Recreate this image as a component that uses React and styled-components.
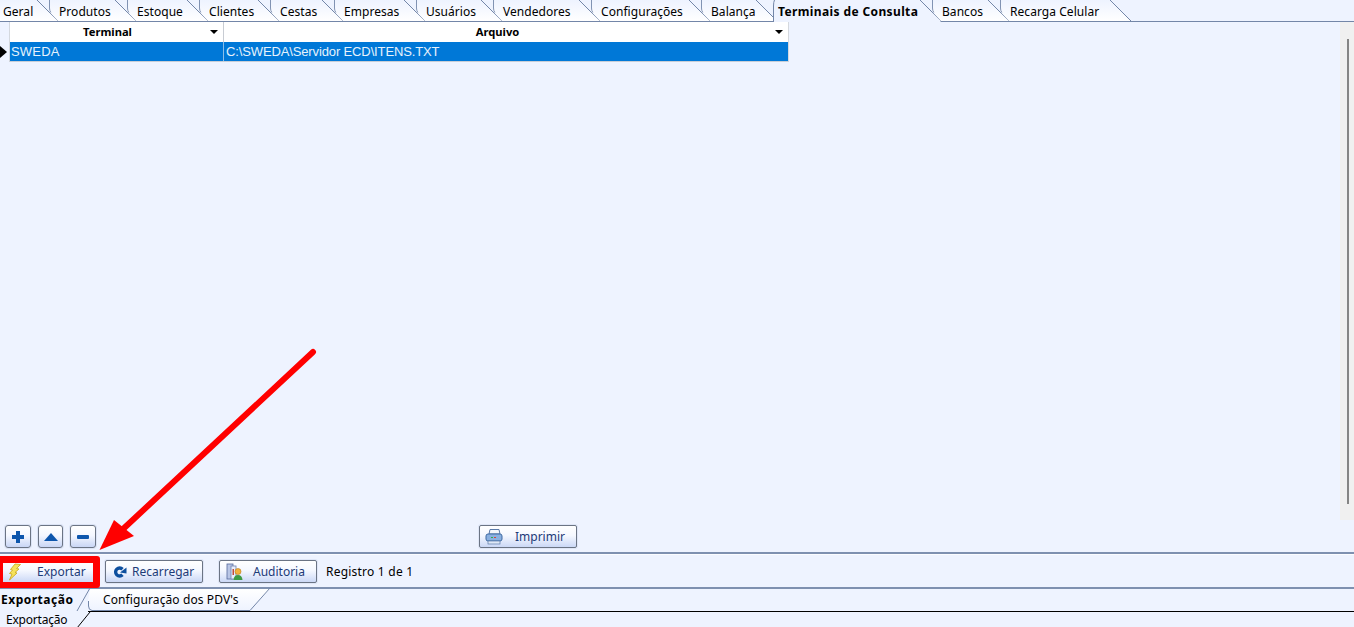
import React from "react";
import styled, { createGlobalStyle } from "styled-components";

const Global = createGlobalStyle`
  html, body { margin: 0; padding: 0; background: #eef3ff; }
  body { font-family: "DejaVu Sans", sans-serif; font-size: 11px; color: #000; overflow: hidden; }
  #root { width: 1354px; height: 627px; }
`;

const Page = styled.div`
  position: relative;
  width: 1354px;
  height: 627px;
  overflow: hidden;
  display: flex;
  flex-direction: column;
  background: #eef3ff;
`;

const TabStrip = styled.div`
  display: flex;
  flex: none;
  height: 22px;
  box-sizing: border-box;
  border-bottom: 1px solid #7386a8;
`;
const TabRow = styled.div`
  display: flex;
  margin-left: -7px;
`;
const TabCell = styled.div`
  position: relative;
  flex: none;
  width: ${(p) => p.$w}px;
  height: 22px;
`;
const TabShape = styled.svg`
  position: absolute;
  left: 0;
  top: 0;
  overflow: visible;
`;
const TabLabel = styled.span`
  position: absolute;
  left: 10px;
  top: 4px;
  line-height: 15px;
  white-space: nowrap;
  font-size: 12px;
  font-family: "Noto Sans", sans-serif;
  font-weight: ${(p) => (p.$active ? 700 : 400)};
  letter-spacing: ${(p) => (p.$active ? "0.38px" : "0.05px")};
  color: #000;
`;

const Main = styled.div`
  flex: none;
  height: 530px;
  display: flex;
  flex-direction: column;
`;
const Content = styled.div`
  flex: none;
  height: 498px;
  display: flex;
`;
const GridZone = styled.div`
  flex: 1;
  display: flex;
  align-items: flex-start;
`;
const Indicator = styled.div`
  flex: none;
  width: 9px;
  height: 40px;
  display: flex;
  flex-direction: column;
  justify-content: flex-end;
  box-sizing: border-box;
  padding-bottom: 4px;
`;
const Pointer = styled.div`
  width: 0;
  height: 0;
  border-left: 7px solid #000;
  border-top: 6px solid transparent;
  border-bottom: 6px solid transparent;
`;
const Grid = styled.div`
  flex: none;
  width: 780px;
  display: grid;
  grid-template-columns: 214px 564px;
  grid-template-rows: 20px 19px;
  box-sizing: border-box;
  border-right: 1px solid #d4d8de;
  border-bottom: 1px solid #c9ced6;
  border-left: 1px solid #d4d8de;
`;
const HeaderCell = styled.div`
  position: relative;
  background: #fff;
  text-align: center;
  font-family: "Noto Sans", sans-serif;
  font-weight: 700;
  font-size: 11.2px;
  line-height: 19px;
  color: #000;
  padding-right: ${(p) => p.$pad}px;
  border-right: ${(p) => (p.$last ? "none" : "1px solid #c8ccd3")};
  box-sizing: border-box;
`;
const Caret = styled.span`
  position: absolute;
  right: 5px;
  top: 8px;
  width: 0;
  height: 0;
  border-top: 4px solid #000;
  border-left: 4px solid transparent;
  border-right: 4px solid transparent;
`;
const DataCell = styled.div`
  background: #0078d7;
  color: #e6f2fc;
  font-family: "Liberation Sans", sans-serif;
  font-size: 13px;
  letter-spacing: ${(p) => p.$track}px;
  line-height: 20px;
  padding-left: ${(p) => p.$pad}px;
  height: 19px;
  overflow: hidden;
  white-space: nowrap;
  border-right: ${(p) => (p.$last ? "none" : "1px solid #8dbfe8")};
  box-sizing: border-box;
`;
const ScrollTrack = styled.div`
  flex: none;
  width: 14px;
  background: #f0f0f0;
  display: flex;
  justify-content: center;
  padding-top: 17px;
  padding-bottom: 16px;
  box-sizing: border-box;
`;
const ScrollThumb = styled.div`
  width: 2px;
  margin-left: 2px;
  background: #858585;
`;

const Actions = styled.div`
  flex: 1;
  display: flex;
  align-items: flex-start;
  padding: 5px 0 0 5px;
`;
const SquareGroup = styled.div`
  display: flex;
  gap: 7px;
`;
const SquareBtn = styled.button`
  flex: none;
  width: ${(p) => p.$w}px;
  height: 23px;
  padding: 0;
  display: flex;
  align-items: center;
  justify-content: center;
  box-sizing: border-box;
  border: 1px solid #6b7484;
  border-radius: 3px;
  background: linear-gradient(#ffffff 0%, #f4f7ff 45%, #c9d6f5 100%);
  box-shadow: 0 0 0 1px #dbe3f5;
`;
const Btn = styled.button`
  flex: none;
  width: ${(p) => p.$w}px;
  height: 23px;
  margin-left: ${(p) => p.$ml || 0}px;
  padding: 0;
  position: relative;
  display: flex;
  align-items: center;
  justify-content: center;
  box-sizing: border-box;
  border: 1px solid #6b7484;
  border-radius: 2px;
  background: linear-gradient(#ffffff 0%, #f5f8ff 45%, #cbd8f6 100%);
  box-shadow: 0 0 0 1px #dfe6f7;
  font-family: "Noto Sans", sans-serif;
  font-size: 12px;
  color: #1d3b78;
`;
const BtnIcon = styled.svg`
  position: absolute;
  left: ${(p) => p.$x}px;
  top: 2px;
`;
const BtnText = styled.span`
  position: absolute;
  left: ${(p) => p.$x}px;
  top: 3px;
  line-height: 15px;
  white-space: nowrap;
`;

const Divider = styled.div`
  flex: none;
  height: 2px;
  background: #7e90b0;
`;
const Toolbar = styled.div`
  position: relative;
  flex: none;
  height: 33px;
  box-sizing: border-box;
  border-top: 1px solid #fbfcff;
  padding: 5px 0 0 1px;
  display: flex;
  align-items: flex-start;
`;
const RedFrame = styled.div`
  position: absolute;
  left: 0;
  top: 1px;
  width: 100px;
  height: 32px;
  box-sizing: border-box;
  border-style: solid;
  border-color: #ff0000;
  border-width: 7px 7px 6px 3px;
  border-top-right-radius: 3px;
  border-bottom-right-radius: 3px;
`;
const Status = styled.span`
  margin-left: 9px;
  line-height: 23px;
  font-family: "Noto Sans", sans-serif;
  font-size: 12px;
  letter-spacing: 0.22px;
  color: #000;
`;

const LowerStrip = styled.div`
  flex: none;
  height: 23px;
  display: flex;
`;
const LowerActive = styled.div`
  flex: none;
  width: 88px;
  font-family: "Noto Sans", sans-serif;
  font-weight: 700;
  font-size: 12px;
  letter-spacing: 0.5px;
  line-height: 22px;
  padding-left: 1px;
  box-sizing: border-box;
`;
const LowerTab = styled.div`
  position: relative;
  flex: none;
  width: 183px;
  box-sizing: border-box;
  border-bottom: 1px solid #000;
`;
const LowerFill = styled.div`
  flex: 1;
  box-sizing: border-box;
  border-bottom: 1px solid #000;
`;
const LowerLabel = styled.span`
  position: absolute;
  left: 15px;
  top: 3px;
  line-height: 15px;
  font-family: "Noto Sans", sans-serif;
  font-size: 12px;
  letter-spacing: 0.1px;
  white-space: nowrap;
`;
const SubStrip = styled.div`
  position: relative;
  flex: 1;
  padding-left: 6px;
  font-family: "Noto Sans", sans-serif;
  font-size: 12px;
  letter-spacing: -0.2px;
  line-height: 16px;
`;
const SubSlant = styled.svg`
  position: absolute;
  left: 76px;
  top: 0;
`;
const Arrow = styled.svg`
  position: absolute;
  left: 0;
  top: 0;
  pointer-events: none;
`;

const tabs = [
  ["Geral", 56], ["Produtos", 78], ["Estoque", 72], ["Clientes", 71], ["Cestas", 64],
  ["Empresas", 82], ["Usuários", 77], ["Vendedores", 98], ["Configurações", 110],
  ["Balança", 67], ["Terminais de Consulta", 164, true], ["Bancos", 68], ["Recarga Celular", 122],
];

function Tab({ label, w, active, first }) {
  const tail = w + 9;
  const fill = active
    ? `M5 0 L${tail - 21} 0 L${tail} 22 L5 22 Z`
    : first
    ? `M0 0 L${w - 11} 0 L${tail} 21 L0 21 Z`
    : `M0 0 L${w - 11} 0 L${tail} 21 L9 21 L1 12.5 Q0 10 0 8 Z`;
  return (
    <TabCell $w={w}>
      <TabShape width={w + 12} height="22">
        <path d={fill} fill={active ? "#eef3ff" : "url(#tabFill)"} />
        {!first && !active && <path d="M0.5 0 L0.5 8 Q0.5 10.5 1.8 12.5" fill="none" stroke="#8193b3" />}
        {active && <path d="M5.5 22 L5.5 6 Q5.5 2 6.5 0" fill="none" stroke="#7386a8" />}
        <path d={`M${tail - 21} 0 L${tail} 21`} fill="none" stroke="#7386a8" />
      </TabShape>
      <TabLabel $active={active}>{label}</TabLabel>
    </TabCell>
  );
}

const Bolt = () => (
  <BtnIcon $x={4} width="18" height="18" viewBox="0 0 18 18">
    <path d="M9 1 L14.5 1.5 L10.5 5.5 L13 6 L9 9.5 L11 10 L3.5 17 L6 11 L3.5 10.5 L6.5 7 L4.5 6.5 Z" fill="#f5e25a" stroke="#c9a516" strokeWidth="0.8" />
  </BtnIcon>
);
const Reload = () => (
  <BtnIcon $x={5} width="18" height="18" viewBox="0 0 18 18">
    <path d="M11.5 6.2 A4 4 0 1 0 11.5 11.8" fill="none" stroke="#0d4f9e" strokeWidth="3.4" />
    <path d="M9 9.5 L15.5 4.5 L15.5 10.5 Z" fill="#0d4f9e" />
  </BtnIcon>
);
const Audit = () => (
  <BtnIcon $x={5} width="20" height="18" viewBox="0 0 20 18">
    <rect x="2" y="1" width="6" height="15" fill="#b9c6e6" stroke="#55699c" strokeWidth="0.8" />
    <rect x="6" y="3" width="5" height="13" fill="#e8eefb" stroke="#6b7fb0" strokeWidth="0.8" />
    <rect x="7.5" y="6" width="1.5" height="6" fill="#c24a3a" />
    <circle cx="13" cy="8.5" r="3" fill="#f2b13c" stroke="#b97a16" strokeWidth="0.6" />
    <path d="M8.5 17 Q9 12 13 12 Q17 12 17.5 17 Z" fill="#3d9a45" />
  </BtnIcon>
);
const Printer = () => (
  <BtnIcon $x={5} width="18" height="18" viewBox="0 0 18 18">
    <path d="M5 1.5 L14 1.5 L15 6 L4 6 Z" fill="#f4f6fb" stroke="#5a79a8" />
    <rect x="1" y="6" width="16" height="7" rx="2" fill="#8ab0e0" stroke="#3f6ba3" />
    <rect x="3" y="13" width="12" height="3" fill="#dfe8f6" stroke="#5a79a8" strokeWidth="0.7" />
    <rect x="6" y="9" width="2" height="1" fill="#2fae4c" />
    <rect x="9" y="9" width="2" height="1" fill="#d8433a" />
  </BtnIcon>
);

export default function App() {
  return (
    <Page>
      <Global />
      <svg width="0" height="0" aria-hidden="true">
        <defs>
          <linearGradient id="tabFill" x1="0" y1="0" x2="0" y2="1">
            <stop offset="0" stopColor="#eef3ff" />
            <stop offset="1" stopColor="#ffffff" />
          </linearGradient>
        </defs>
      </svg>
      <TabStrip>
        <TabRow>
          {tabs.map(([label, w, active], i) => (
            <Tab key={label} label={label} w={w} active={active} first={i === 0} />
          ))}
        </TabRow>
      </TabStrip>
      <Main>
        <Content>
          <GridZone>
            <Indicator>
              <Pointer />
            </Indicator>
            <Grid>
              <HeaderCell $pad={18}>Terminal<Caret /></HeaderCell>
              <HeaderCell $pad={17} $last>Arquivo<Caret /></HeaderCell>
              <DataCell $pad={1} $track={0.2}>SWEDA</DataCell>
              <DataCell $pad={2} $track={-0.13} $last>C:\SWEDA\Servidor ECD\ITENS.TXT</DataCell>
            </Grid>
          </GridZone>
          <ScrollTrack>
            <ScrollThumb />
          </ScrollTrack>
        </Content>
        <Actions>
          <SquareGroup>
            <SquareBtn $w={26} aria-label="Adicionar">
              <svg width="14" height="14" viewBox="0 0 14 14"><path d="M5 1 H9 V5 H13 V9 H9 V13 H5 V9 H1 V5 H5 Z" fill="#0d56ad" /></svg>
            </SquareBtn>
            <SquareBtn $w={25} aria-label="Subir">
              <svg width="16" height="10" viewBox="0 0 16 10"><path d="M8 1 L15 9 H1 Z" fill="#0d56ad" /></svg>
            </SquareBtn>
            <SquareBtn $w={26} aria-label="Remover">
              <svg width="14" height="6" viewBox="0 0 14 6"><rect x="1" y="1" width="12" height="4" rx="1" fill="#0d56ad" /></svg>
            </SquareBtn>
          </SquareGroup>
          <Btn $w={98} $ml={383}>
            <Printer />
            <BtnText $x={35}>Imprimir</BtnText>
          </Btn>
        </Actions>
      </Main>
      <Divider />
      <Toolbar>
        <Btn $w={97}>
          <Bolt />
          <BtnText $x={35}>Exportar</BtnText>
        </Btn>
        <Btn $w={98} $ml={7}>
          <Reload />
          <BtnText $x={26}>Recarregar</BtnText>
        </Btn>
        <Btn $w={98} $ml={16}>
          <Audit />
          <BtnText $x={33}>Auditoria</BtnText>
        </Btn>
        <Status>Registro 1 de 1</Status>
        <RedFrame />
      </Toolbar>
      <Divider />
      <LowerStrip>
        <LowerActive>Exportação</LowerActive>
        <LowerTab>
          <TabShape width="183" height="23">
            <path d="M2 0 H182 L162 21.5 H4 Q0 21 0 17 V12 Z" fill="url(#lowerFill)" />
            <path d="M2 -1 L-11 22 M0.5 12 V17 Q0.5 21 4 21.5 H162 L182 -1" fill="none" stroke="#7386a8" />
            <defs>
              <linearGradient id="lowerFill" x1="0" y1="0" x2="0" y2="1">
                <stop offset="0" stopColor="#ffffff" />
                <stop offset="1" stopColor="#eef3ff" />
              </linearGradient>
            </defs>
          </TabShape>
          <LowerLabel>Configuração dos PDV's</LowerLabel>
        </LowerTab>
        <LowerFill />
      </LowerStrip>
      <SubStrip>
        Exportação
        <SubSlant width="16" height="16" viewBox="0 0 16 16">
          <path d="M14 0 L1 16" fill="none" stroke="#000" />
        </SubSlant>
      </SubStrip>
      <Arrow width="1354" height="627" viewBox="0 0 1354 627">
        <path d="M313 352 L122 530" fill="none" stroke="#ff0000" strokeWidth="6" strokeLinecap="round" />
        <path d="M99.5 550 L114 520 L134 536 Z" fill="#ff0000" />
      </Arrow>
    </Page>
  );
}
